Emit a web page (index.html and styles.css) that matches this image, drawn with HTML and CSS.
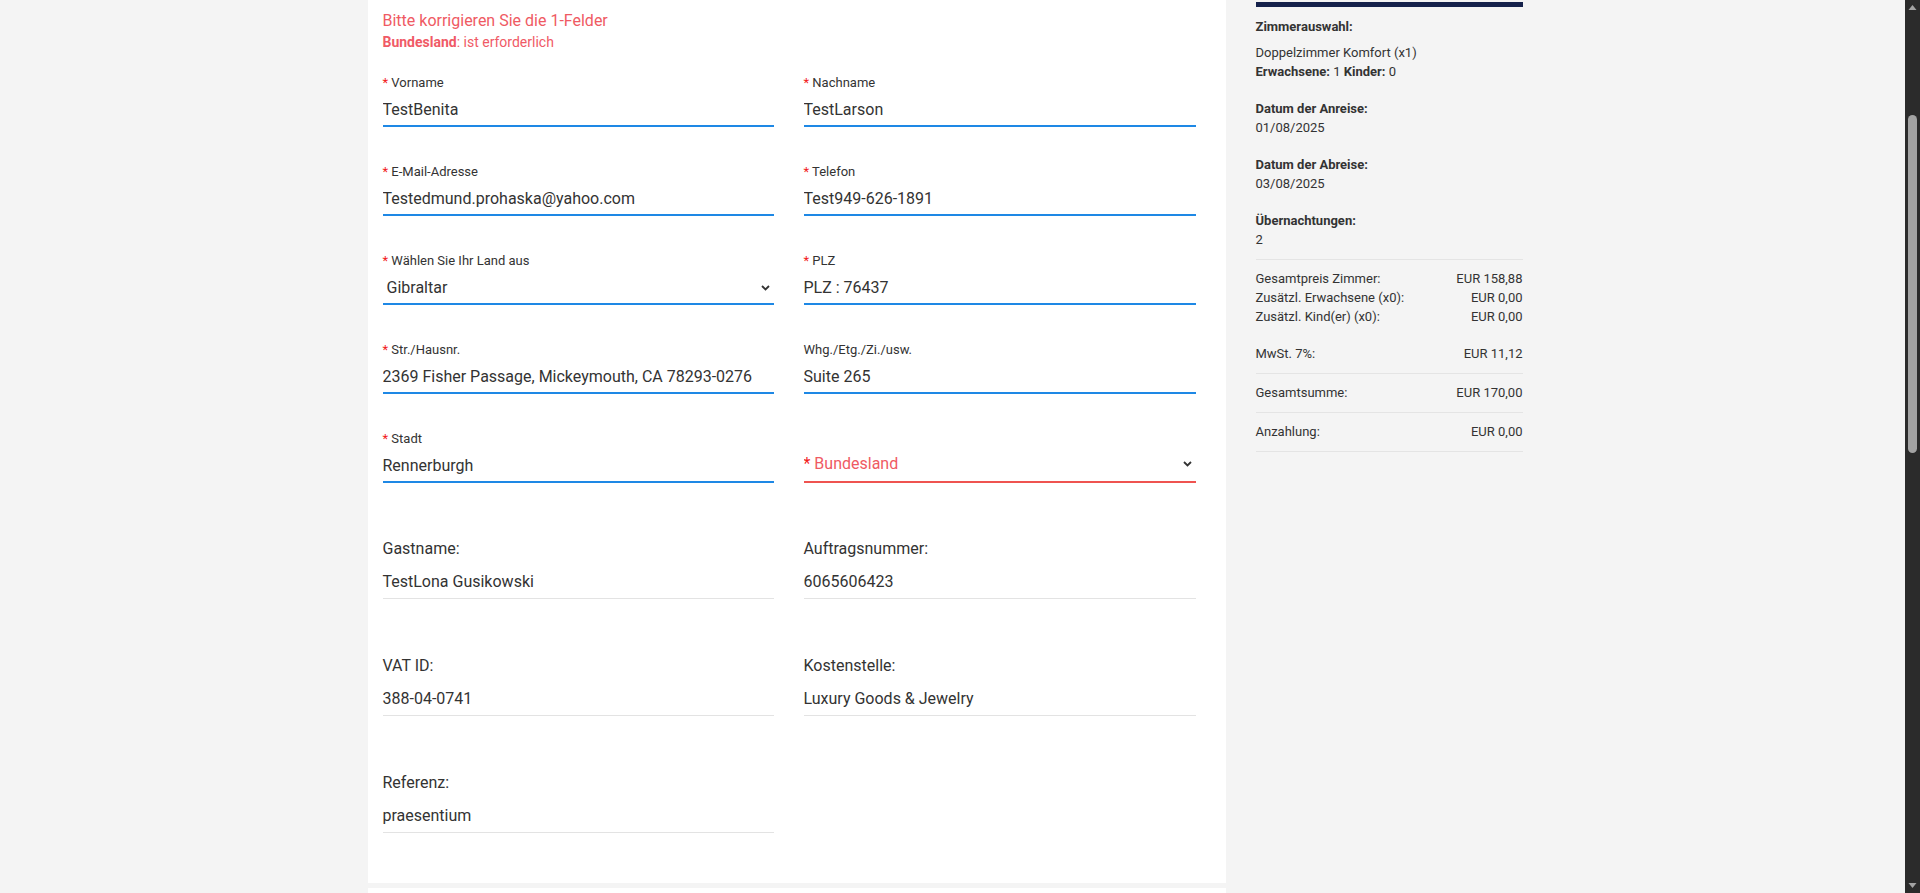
FILE: index.html
```html
<!DOCTYPE html>
<html lang="de">
<head>
<meta charset="utf-8">
<title>Buchung</title>
<link rel="stylesheet" href="styles.css">
</head>
<body>
<div class="viewport">
  <div class="page">
    <div class="container">
      <main class="main">
        <section class="card">
          <div class="errors">
            <div class="errors-title">Bitte korrigieren Sie die 1-Felder</div>
            <div class="errors-item"><strong>Bundesland</strong>: ist erforderlich</div>
          </div>
          <div class="form-grid">
            <div class="field">
              <label class="field-label"><span class="req">*</span> Vorname</label>
              <div class="field-input">TestBenita</div>
            </div>
            <div class="field">
              <label class="field-label"><span class="req">*</span> Nachname</label>
              <div class="field-input">TestLarson</div>
            </div>
            <div class="field">
              <label class="field-label"><span class="req">*</span> E-Mail-Adresse</label>
              <div class="field-input">Testedmund.prohaska@yahoo.com</div>
            </div>
            <div class="field">
              <label class="field-label"><span class="req">*</span> Telefon</label>
              <div class="field-input">Test949-626-1891</div>
            </div>
            <div class="field">
              <label class="field-label"><span class="req">*</span> Wählen Sie Ihr Land aus</label>
              <div class="field-input field-select"><span>Gibraltar</span><svg class="chev" width="9" height="6" viewBox="0 0 9 6"><path d="M1 1 L4.5 4.5 L8 1" fill="none" stroke="#333" stroke-width="1.8"/></svg></div>
            </div>
            <div class="field">
              <label class="field-label"><span class="req">*</span> PLZ</label>
              <div class="field-input">PLZ : 76437</div>
            </div>
            <div class="field">
              <label class="field-label"><span class="req">*</span> Str./Hausnr.</label>
              <div class="field-input">2369 Fisher Passage, Mickeymouth, CA 78293-0276</div>
            </div>
            <div class="field">
              <label class="field-label">Whg./Etg./Zi./usw.</label>
              <div class="field-input">Suite 265</div>
            </div>
            <div class="field">
              <label class="field-label"><span class="req">*</span> Stadt</label>
              <div class="field-input">Rennerburgh</div>
            </div>
            <div class="field">
              <label class="field-label">&nbsp;</label>
              <div class="field-input field-select field-error"><span><span class="req">*</span> Bundesland</span><svg class="chev" width="9" height="6" viewBox="0 0 9 6"><path d="M1 1 L4.5 4.5 L8 1" fill="none" stroke="#333" stroke-width="1.8"/></svg></div>
            </div>
          </div>
          <div class="info-grid">
            <div class="info">
              <div class="info-label">Gastname:</div>
              <div class="info-value">TestLona Gusikowski</div>
            </div>
            <div class="info">
              <div class="info-label">Auftragsnummer:</div>
              <div class="info-value">6065606423</div>
            </div>
            <div class="info">
              <div class="info-label">VAT ID:</div>
              <div class="info-value">388-04-0741</div>
            </div>
            <div class="info">
              <div class="info-label">Kostenstelle:</div>
              <div class="info-value">Luxury Goods &amp; Jewelry</div>
            </div>
            <div class="info">
              <div class="info-label">Referenz:</div>
              <div class="info-value">praesentium</div>
            </div>
          </div>
        </section>
        <section class="card card-next"></section>
      </main>
      <aside class="summary">
        <div class="summary-bar"></div>
        <div class="sum-block sum-first">
          <div class="sum-title">Zimmerauswahl:</div>
          <div class="sum-room">Doppelzimmer Komfort (x1)<br><strong>Erwachsene:</strong> 1 <strong>Kinder:</strong> 0</div>
        </div>
        <div class="sum-block">
          <div class="sum-title">Datum der Anreise:</div>
          <div>01/08/2025</div>
        </div>
        <div class="sum-block">
          <div class="sum-title">Datum der Abreise:</div>
          <div>03/08/2025</div>
        </div>
        <div class="sum-block sum-last">
          <div class="sum-title">Übernachtungen:</div>
          <div>2</div>
        </div>
        <div class="sum-section">
          <div class="sum-row"><span>Gesamtpreis Zimmer:</span><span>EUR 158,88</span></div>
          <div class="sum-row"><span>Zusätzl. Erwachsene (x0):</span><span>EUR 0,00</span></div>
          <div class="sum-row"><span>Zusätzl. Kind(er) (x0):</span><span>EUR 0,00</span></div>
          <div class="sum-row sum-gap"><span>MwSt. 7%:</span><span>EUR 11,12</span></div>
        </div>
        <div class="sum-section">
          <div class="sum-row"><span>Gesamtsumme:</span><span>EUR 170,00</span></div>
        </div>
        <div class="sum-section">
          <div class="sum-row"><span>Anzahlung:</span><span>EUR 0,00</span></div>
        </div>
      </aside>
    </div>
  </div>
  <div class="scrollbar">
    <svg class="sb-arrow" width="15" height="15" viewBox="0 0 15 15"><path d="M3.5 10 L7.5 5 L11.5 10 Z" fill="#a3a3a3"/></svg>
    <div class="sb-track"><div class="sb-thumb"></div></div>
    <svg class="sb-arrow" width="15" height="15" viewBox="0 0 15 15"><path d="M3.5 5 L7.5 10 L11.5 5 Z" fill="#a3a3a3"/></svg>
  </div>
</div>
</body>
</html>
```
FILE: styles.css
```css
* { box-sizing: border-box; }
html, body { margin: 0; padding: 0; height: 100%; }
body {
  background: #f4f4f4;
  font-family: Roboto, "Liberation Sans", Arial, sans-serif;
  color: #333;
  overflow: hidden;
}
.viewport {
  display: flex;
  height: 893px;
}
.page {
  flex: 1;
  overflow: hidden;
}
.container {
  width: 1170px;
  margin: 0 auto;
  display: flex;
  align-items: flex-start;
  padding-right: 15px;
  gap: 30px;
}
.main {
  width: 858px;
  flex: none;
}
.card {
  background: #fff;
  padding: 11px 30px 0 15px;
  height: 883px;
}
.card-next {
  margin-top: 5px;
  height: 40px;
}
.errors-title {
  font-size: 16px;
  line-height: 20px;
  color: #ef5a63;
}
.errors-item {
  font-size: 14px;
  line-height: 18px;
  margin-top: 2px;
  color: #f05a66;
}
.errors-item strong { font-weight: 700; }
.form-grid {
  margin-top: 23px;
  display: grid;
  grid-template-columns: 391px 392px;
  column-gap: 30px;
}
.field { margin-bottom: 36px; }
.field-label {
  display: block;
  font-size: 13px;
  line-height: 17px;
  color: #333;
  white-space: nowrap;
}
.req { color: #f21b1b; }
.field-input {
  height: 36px;
  padding-top: 4px;
  border-bottom: 2px solid #1e88e5;
  font-size: 16px;
  line-height: 30px;
  color: #333;
  white-space: nowrap;
  overflow: hidden;
}
.field-select {
  display: flex;
  align-items: center;
  justify-content: space-between;
  padding-left: 4px;
  padding-right: 4px;
}
.field-error {
  border-bottom-color: #ef5350;
  color: #ef5a63;
  padding-left: 0;
  padding-top: 0;
}
.chev { flex: none; }
.info-grid {
  margin-top: 20px;
  display: grid;
  grid-template-columns: 391px 392px;
  column-gap: 30px;
}
.info { margin-bottom: 57px; }
.info-label {
  font-size: 16px;
  line-height: 20px;
  color: #333;
}
.info-value {
  margin-top: 13px;
  font-size: 16px;
  line-height: 20px;
  padding-bottom: 6px;
  border-bottom: 1px solid #e3e3e3;
  color: #333;
}
.summary {
  width: 267px;
  flex: none;
  font-size: 13px;
  line-height: 19px;
  color: #333;
}
.summary-bar {
  margin-top: 2px;
  height: 5px;
  background: #15214b;
}
.sum-title { font-weight: 700; }
.sum-block { padding-top: 18px; }
.sum-first { padding-top: 10px; }
.sum-room { margin-top: 7px; }
.sum-last { padding-bottom: 10px; }
.sum-section {
  border-top: 1px solid #e4e4e4;
  padding: 9px 0 10px;
}
.sum-section:last-child { border-bottom: 1px solid #e4e4e4; }
.sum-row {
  display: flex;
  justify-content: space-between;
}
.sum-gap { margin-top: 18px; }
.scrollbar {
  width: 15px;
  flex: none;
  background: #2b2b2b;
  display: flex;
  flex-direction: column;
}
.sb-arrow { display: block; flex: none; }
.sb-track {
  flex: 1;
  padding: 0 3px;
}
.sb-thumb {
  margin-top: 100px;
  height: 338px;
  background: #a3a3a3;
  border-radius: 5px;
}
```
